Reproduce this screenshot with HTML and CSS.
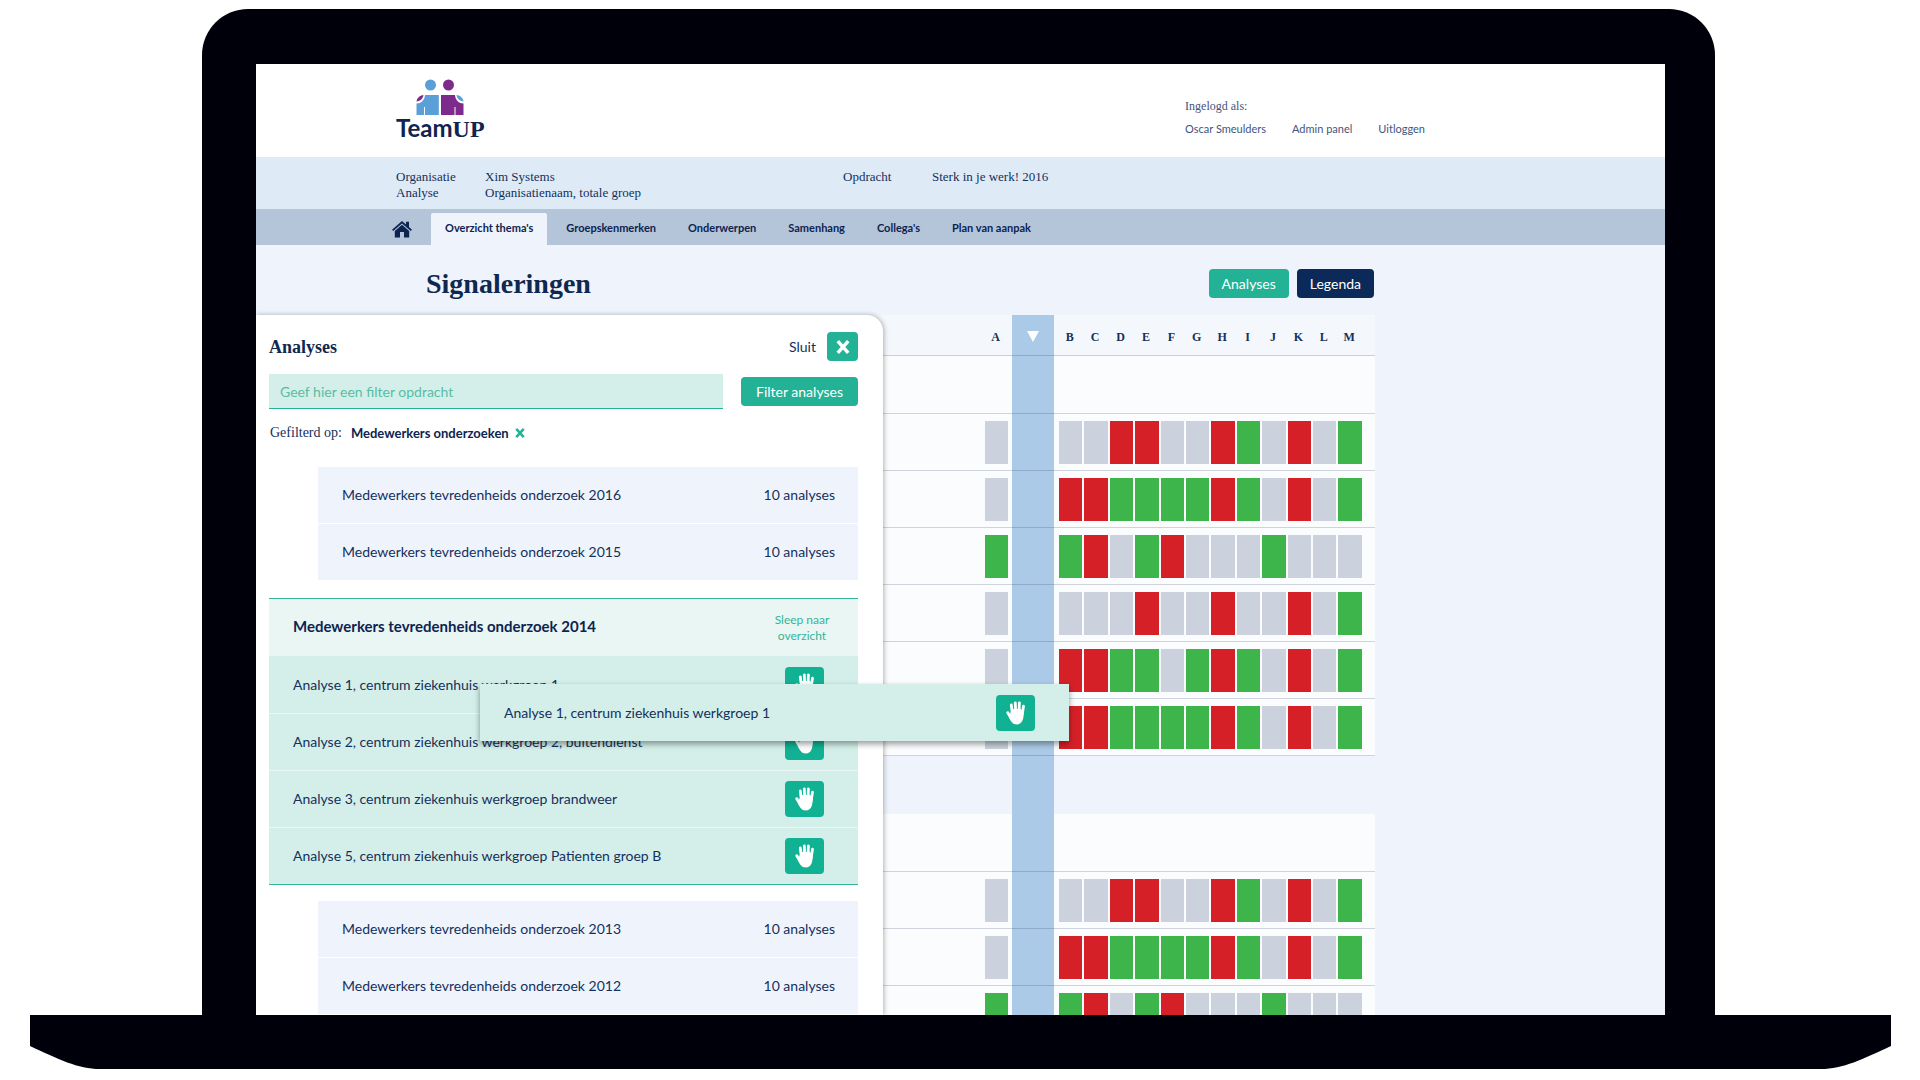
FILE: index.html
```html
<!DOCTYPE html>
<html lang="nl">
<head>
<meta charset="utf-8">
<title>TeamUP - Signaleringen</title>
<link rel="stylesheet" href="styles.css">
</head>
<body>
<svg class="sprite" aria-hidden="true">
  <symbol id="hand" viewBox="0 0 20 24">
    <g fill="none" stroke="currentColor" stroke-linecap="round">
      <path stroke-width="2.800" d="M6.400 13 5.300 4M9.700 12 9.300 1.800M13 12l.4-10M16.200 13.500l1.300-8.300"/>
      <path stroke-width="2.900" d="M1.800 11.800 5 17"/>
    </g>
    <path fill="currentColor" d="M5 10.500 6 8h9l2.600 3.500c.3 6.500-1.500 12-6.800 12-4.400 0-6-3.300-8-7.500z"/>
  </symbol>
  <symbol id="cross" viewBox="0 0 12 12">
    <path fill="none" stroke="currentColor" stroke-width="3" d="M1.500 1 10.500 11M10.500 1 1.500 11"/>
  </symbol>
</svg>

<div class="lid">
  <div class="screen">
    <header class="masthead">
      <a class="logo" href="#" aria-label="TeamUP">
        <svg class="logo-mark" viewBox="0 0 48 36" aria-hidden="true">
          <circle cx="14.500" cy="6" r="5.500" fill="#5b9fd8"/>
          <circle cx="32.500" cy="6" r="5.500" fill="#7d2a8c"/>
          <path fill="#5b9fd8" d="M9 16h13.800v21H9v-9H8v9H.5V24.500C5 24.500 8.500 21.500 9 16z"/>
          <path fill="#7d2a8c" d="M39 16H25v21h13.500v-9h1v9H47.500V24.500C43 24.500 39.500 21.500 39 16z"/>
          <path fill="#7d2a8c" d="M.5 22.500C1 19 3.500 16.500 7.500 16c-.5 3.500-3 6-7 6.500z"/>
          <path fill="#5b9fd8" d="M47.500 22.500c-.5-3.500-3-6-7-6.500.5 3.500 3 6 7 6.500z"/>
        </svg>
        <span class="logo-text">Team<span class="logo-up">UP</span></span>
      </a>
      <div class="account">
        <p class="account-label">Ingelogd als:</p>
        <nav class="account-links">
          <a href="#">Oscar Smeulders</a>
          <a href="#">Admin panel</a>
          <a href="#">Uitloggen</a>
        </nav>
      </div>
    </header>

    <div class="context">
      <dl class="facts facts-main">
        <dt>Organisatie</dt><dd>Xim Systems</dd>
        <dt>Analyse</dt><dd>Organisatienaam, totale groep</dd>
      </dl>
      <dl class="facts">
        <dt>Opdracht</dt><dd>Sterk in je werk! 2016</dd>
      </dl>
    </div>

    <nav class="tabs">
      <a class="home" href="#" aria-label="Home">
        <svg viewBox="0 0 20 17" aria-hidden="true"><path fill="currentColor" d="M10 0 0 8.700l1.200 1.300L10 2.500 18.800 10 20 8.700 17 6V.8h-3v2.600z"/><path fill="currentColor" d="M10 3.800 2.800 10v6.500H8V11h4v5.500h5.200V10z"/></svg>
      </a>
      <a class="tab tab-active" href="#">Overzicht thema's</a>
      <a class="tab" href="#">Groepskenmerken</a>
      <a class="tab" href="#">Onderwerpen</a>
      <a class="tab" href="#">Samenhang</a>
      <a class="tab" href="#">Collega's</a>
      <a class="tab" href="#">Plan van aanpak</a>
    </nav>

    <div class="titlebar">
      <h1>Signaleringen</h1>
      <button class="btn" type="button">Analyses</button>
      <button class="btn btn-dark" type="button">Legenda</button>
    </div>

    <main class="workspace">
      <table class="signals">
        <colgroup><col class="c-name"><col class="c-a"><col class="c-drop"><col class="c-lead"><col span="12"><col class="c-tail"></colgroup>
        <thead id="head"></thead>
        <tbody id="rows"></tbody>
      </table>

      <section class="drawer">
        <div class="drawer-head">
          <h2>Analyses</h2>
          <label for="close">Sluit</label>
          <button class="close" id="close" type="button"><svg viewBox="0 0 12 12" aria-hidden="true"><use href="#cross"/></svg></button>
        </div>
        <form class="filter">
          <input type="text" placeholder="Geef hier een filter opdracht" aria-label="Filter opdracht">
          <button class="btn btn-wide" type="button">Filter analyses</button>
        </form>
        <p class="filtered">
          <span class="filtered-label">Gefilterd op:</span>
          <strong>Medewerkers onderzoeken</strong>
          <button class="clear" type="button" aria-label="Verwijder filter"><svg viewBox="0 0 12 12" aria-hidden="true"><use href="#cross"/></svg></button>
        </p>

        <ul class="studies">
          <li><a href="#">Medewerkers tevredenheids onderzoek 2016</a><span>10 analyses</span></li>
          <li><a href="#">Medewerkers tevredenheids onderzoek 2015</a><span>10 analyses</span></li>
        </ul>

        <section class="open-study">
          <div class="open-head">
            <h3>Medewerkers tevredenheids onderzoek 2014</h3>
            <p>Sleep naar overzicht</p>
          </div>
          <ul class="analyses">
            <li>Analyse 1, centrum ziekenhuis werkgroep 1<button class="grab" type="button" aria-label="Sleep analyse 1"><svg><use href="#hand"/></svg></button></li>
            <li>Analyse 2, centrum ziekenhuis werkgroep 2, buitendienst<button class="grab" type="button" aria-label="Sleep analyse 2"><svg><use href="#hand"/></svg></button></li>
            <li>Analyse 3, centrum ziekenhuis werkgroep brandweer<button class="grab" type="button" aria-label="Sleep analyse 3"><svg><use href="#hand"/></svg></button></li>
            <li>Analyse 5, centrum ziekenhuis werkgroep Patienten groep B<button class="grab" type="button" aria-label="Sleep analyse 5"><svg><use href="#hand"/></svg></button></li>
          </ul>
        </section>

        <ul class="studies">
          <li><a href="#">Medewerkers tevredenheids onderzoek 2013</a><span>10 analyses</span></li>
          <li><a href="#">Medewerkers tevredenheids onderzoek 2012</a><span>10 analyses</span></li>
        </ul>
      </section>

      <div class="dragged">Analyse 1, centrum ziekenhuis werkgroep 1<button class="grab" type="button" aria-label="Analyse 1 loslaten"><svg><use href="#hand"/></svg></button></div>
    </main>
  </div>
</div>
<svg class="base" viewBox="0 0 1861 54" preserveAspectRatio="none" aria-hidden="true"><path d="M0 0H1861V31C1833 44 1813 54 1791 54H70C48 54 28 44 0 31z"/></svg>
<script src="table.js"></script>
</body>
</html>
```
FILE: styles.css
```css
* { box-sizing: border-box; }

body {
  margin: 0;
  height: 100vh;
  padding: 9px 29px 11px 30px;
  display: flex;
  flex-direction: column;
  overflow: hidden;
  background: #fff;
  color: #14305c;
  font: 14px/20px Lato, "Noto Sans", sans-serif;
}

h1, h2, h3, p, ul, dl, dd { margin: 0; padding: 0; }
ul { list-style: none; }
a { color: inherit; text-decoration: none; }
button, input { font: inherit; border: 0; margin: 0; }
button { cursor: pointer; padding: 0; }
.sprite { position: absolute; width: 0; height: 0; }

/* Laptop */
.lid {
  flex: 1;
  min-height: 0;
  margin: 0 176px 0 172px;
  padding: 55px 50px 0 54px;
  border-radius: 46px 46px 0 0;
  background: #00000b;
}
.screen { height: 100%; overflow: hidden; background: #eff4fc; }
.base { flex: none; display: block; width: 100%; height: 54px; fill: #00000b; }

/* Header */
.masthead {
  display: flex;
  align-items: flex-start;
  height: 93px;
  padding: 15px 0 0 140px;
  background: #fff;
}
.logo { display: flex; flex-direction: column; align-items: center; color: #13234f; }
.logo-mark { width: 48px; height: 36px; }
.logo-text { font-size: 24px; line-height: 26px; font-weight: 700; }
.logo-up { font-family: "Liberation Serif", serif; }
.account { margin: 16px 240px 0 auto; font-size: 11px; color: #43557c; }
.account-label { font: 12px/22px "Liberation Serif", serif; }
.account-links { display: flex; gap: 26px; line-height: 24px; }

.context {
  display: flex;
  height: 52px;
  padding: 12px 0 0 140px;
  background: #deebf6;
  font: 13px/16px "Liberation Serif", serif;
}
.facts { display: grid; grid-template-columns: 89px auto; align-content: start; }
.facts-main { width: 447px; }

.tabs {
  display: flex;
  align-items: flex-end;
  height: 36px;
  padding-left: 136px;
  background: #b4c5d9;
  color: #0d2350;
  font-size: 11px;
  font-weight: 700;
}
.home { width: 39px; padding-bottom: 7px; }
.home svg { display: block; width: 20px; height: 17px; }
.tab { padding: 5px 16px 7px; }
.tab-active { margin-right: 3px; padding: 5px 14px 7px; border-radius: 2px 2px 0 0; background: #eff4fc; }

.titlebar {
  display: flex;
  align-items: center;
  gap: 8px;
  height: 70px;
  padding: 7px 291px 0 170px;
}
.titlebar h1 { margin-right: auto; font: 700 28px/32px "Liberation Serif", serif; color: #0f2850; }

.btn { height: 29px; padding: 0 13px; border-radius: 4px; background: #23b295; color: #fff; }
.btn-dark { background: #0c2a59; }
.btn-wide { padding: 0 15px; }

/* Signals table */
.workspace { position: relative; }
.signals {
  width: 979px;
  margin-left: 140px;
  table-layout: fixed;
  border-collapse: separate;
  border-spacing: 0;
}
.c-name { width: 585px; }
.c-a { width: 31px; }
.c-drop { width: 42px; }
.c-lead { width: 4px; }
.c-tail { width: 12px; }
.signals th, .signals td {
  height: 57px;
  padding: 0 1px;
  border-bottom: 1px solid rgba(30, 50, 90, .2);
  background: #fbfcfe;
}
.signals th {
  height: 41px;
  padding: 3px 3px 0 1px;
  background: #f4f8fc;
  font: 700 12px/16px "Liberation Serif", serif;
}
.signals .drop, .signals .break .drop { background: #abcae7; }
.signals .group td { height: 58px; }
.signals .break td { height: 58px; border: 0; background: transparent; }
.signals td.a { padding: 0 4px; }
.signals th.drop { padding: 3px 1px 0; }
.arrow { display: block; margin: 0 auto; width: 12px; height: 11px; background: #fff; clip-path: polygon(0 0, 100% 0, 50% 100%); }
.mark { display: block; height: 43px; background: #cbd2dd; }
.mark-r { background: #d62027; }
.mark-g { background: #3db54a; }

/* Analyses drawer */
.drawer {
  position: absolute;
  top: 0;
  left: 0;
  width: 627px;
  padding: 17px 25px 0 13px;
  border-radius: 0 16px 0 0;
  background: #fff;
  box-shadow: 1px 0 5px rgba(0, 0, 0, .3);
}
.drawer-head { display: flex; align-items: center; gap: 11px; }
.drawer-head h2 { margin-right: auto; font: 700 18px/24px "Liberation Serif", serif; color: #0f2850; }
.close { display: grid; place-items: center; width: 31px; height: 29px; border-radius: 4px; background: #23b295; color: #fff; }
.close svg { width: 14px; height: 14px; }
.filter { display: flex; align-items: center; gap: 18px; margin-top: 13px; }
.filter input {
  flex: 1;
  min-width: 0;
  height: 35px;
  padding: 0 11px;
  border-bottom: 1px solid #23b295;
  background: #d4efe9;
}
.filter input::placeholder { color: #58bda4; opacity: 1; }
.filtered { display: flex; align-items: center; gap: 6px; height: 20px; margin: 14px 0 24px 1px; }
.filtered-label { margin-right: 3px; font: 14px/20px "Liberation Serif", serif; }
.filtered strong { font-size: 13px; color: #0d2350; }
.clear { background: none; color: #23b295; }
.clear svg { display: block; width: 10px; height: 10px; }

.studies { margin-left: 49px; }
.studies li {
  display: flex;
  align-items: center;
  justify-content: space-between;
  height: 57px;
  padding: 0 23px 0 24px;
  border-bottom: 1px solid #fff;
  background: #eff4fc;
}
.open-study {
  margin: 17px 0 16px;
  border: solid #35b598;
  border-width: 1px 0;
}
.open-head {
  display: flex;
  align-items: center;
  justify-content: space-between;
  height: 57px;
  padding: 0 24px;
  background: #eaf6f4;
}
.open-head h3 { padding-bottom: 4px; font-size: 15px; line-height: 20px; color: #0d2350; }
.open-head p { width: 64px; font-size: 12px; line-height: 16px; text-align: center; color: #35b598; }
.analyses li, .dragged {
  display: flex;
  align-items: center;
  justify-content: space-between;
  height: 57px;
  padding: 0 34px 0 24px;
  background: #d4efe9;
}
.analyses li + li { border-top: 1px solid #eaf6f4; }
.grab { display: grid; place-items: center; width: 39px; height: 36px; border-radius: 4px; background: #11b294; color: #fff; }
.grab svg { width: 20px; height: 24px; }
.dragged {
  position: absolute;
  top: 369px;
  left: 224px;
  width: 589px;
  box-shadow: 0 3px 6px rgba(0, 0, 0, .4);
}
```
FILE: table.js
```js
// r = red, g = green, - = neutral; the first mark belongs to column A.
// An empty string is a group heading row, null the space between groups.
const rows = [
  '', '---rr--rg-r-g', '-rrggggrg-r-g', 'ggr-gr---g---', '----r--r--r-g',
  '-rrgg-grg-r-g', '-rrggggrg-r-g', null,
  '', '---rr--rg-r-g', '-rrggggrg-r-g', 'ggr-gr---g---',
];
const mark = (c) => c ? `<span class="mark mark-${c === '-' ? 'n' : c}"></span>` : '';
const kind = (row) => row === null ? 'break' : row === '' ? 'group' : 'scores';

document.getElementById('head').innerHTML =
  '<tr><th></th><th class="a">A</th><th class="drop"><span class="arrow"></span></th><th></th>' +
  [...'BCDEFGHIJKLM'].map((l) => `<th>${l}</th>`).join('') + '<th></th></tr>';

document.getElementById('rows').innerHTML = rows.map((row) => {
  const m = row || '';
  let cells = `<td></td><td class="a">${mark(m[0])}</td><td class="drop"></td><td></td>`;
  for (let i = 1; i < 13; i++) cells += `<td>${mark(m[i])}</td>`;
  return `<tr class="${kind(row)}">${cells}<td></td></tr>`;
}).join('');
```
